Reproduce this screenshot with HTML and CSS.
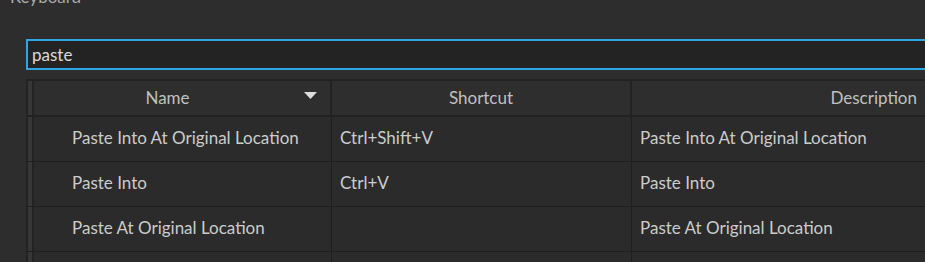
FILE: index.html
```html
<!DOCTYPE html>
<html lang="en">
<head>
  <meta charset="UTF-8">
  <meta name="viewport" content="width=device-width, initial-scale=1.0">
  <title>Keyboard Shortcuts</title>
  <link rel="stylesheet" href="styles.css">
</head>
<body>
  <div class="title">Keyboard</div>
  <div class="search">paste</div>

  <div class="grid">
    <div class="row head">
      <div class="rh"></div>
      <div class="cell name">Name
        <svg class="sort" width="13" height="7" viewBox="0 0 13 7"><path d="M0 0H13L6.5 7Z" fill="#dcdcdc"/></svg>
      </div>
      <div class="cell shortcut">Shortcut</div>
      <div class="cell desc">Description</div>
    </div>
    <div class="row">
      <div class="rh"></div>
      <div class="cell name">Paste Into At Original Location</div>
      <div class="cell shortcut">Ctrl+Shift+V</div>
      <div class="cell desc">Paste Into At Original Location</div>
    </div>
    <div class="row">
      <div class="rh"></div>
      <div class="cell name">Paste Into</div>
      <div class="cell shortcut">Ctrl+V</div>
      <div class="cell desc">Paste Into</div>
    </div>
    <div class="row">
      <div class="rh"></div>
      <div class="cell name">Paste At Original Location</div>
      <div class="cell shortcut"></div>
      <div class="cell desc">Paste At Original Location</div>
    </div>
    <div class="row">
      <div class="rh"></div>
      <div class="cell name"></div>
      <div class="cell shortcut"></div>
      <div class="cell desc"></div>
    </div>
  </div>
</body>
</html>
```

FILE: styles.css
```css
body {
  margin: 0;
  background-color: #2d2d2d;
  font-family: Lato, "Noto Sans", sans-serif;
  font-size: 17px;
  color: #cccccc;
  overflow: hidden;
  height: 262px;
}
.title {
  margin: -13px 0 0 10px;
  line-height: 20px;
  color: #a8a8a8;
}
.search {
  box-sizing: border-box;
  margin: 32px 0 0 26px;
  width: 920px;
  height: 31px;
  border: 2px solid #2ea6e6;
  border-right: none;
  background-color: #232323;
  padding-left: 4px;
  line-height: 27px;
  color: #dadada;
}
.grid {
  margin: 9px 0 0 26px;
  width: 899px;
}
.row {
  display: grid;
  grid-template-columns: 8px 298px 300px 1fr;
  height: 45px;
  border-bottom: 1px solid #1f1f1f;
  box-sizing: border-box;
  background-color: #2b2b2b;
}
.rh {
  border-left: 2px solid #232323;
  border-right: 2px solid #232323;
  background-color: #363636;
}
.cell {
  border-right: 1px solid #1f1f1f;
  line-height: 42px;
  padding: 0 8px 2px;
  white-space: nowrap;
  overflow: hidden;
}
.cell.name {
  padding-left: 38px;
}
.cell.desc {
  border-right: none;
}
.row.head {
  height: 38px;
  border-top: 2px solid #222;
  border-bottom: 2px solid #222;
  background-color: #2e2e2e;
}
.row.head .cell {
  line-height: 33px;
  padding: 0;
  text-align: center;
  border-right: 2px solid #222;
  color: #c0c0c0;
}
.row.head .cell.name {
  position: relative;
  padding-right: 29px;
}
.row.head .cell.desc {
  text-align: right;
  padding-right: 8px;
  border-right: none;
}
.sort {
  position: absolute;
  left: 270px;
  top: 11px;
}
```
